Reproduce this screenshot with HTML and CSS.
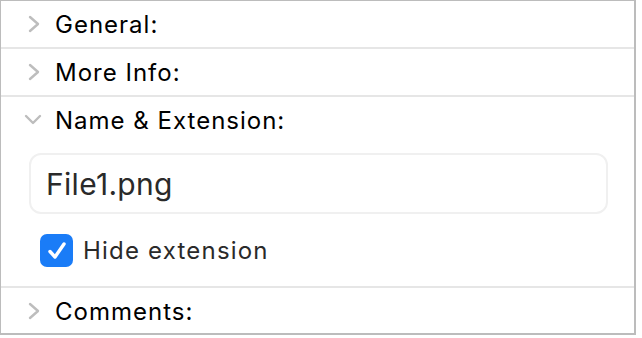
FILE: index.html
```html
<!DOCTYPE html>
<html lang="en">

<head>
    <meta charset="UTF-8">
    <meta name="viewport" content="width=device-width, initial-scale=1.0">
    <title>Info</title>
    <link rel="stylesheet" href="styles.css">
</head>

<body>
    <div class="panel">
        <div class="section">
            <div class="section-head">
                <svg class="chevron" width="14" height="18" viewBox="0 0 14 18"><path d="M3 2 L11 9 L3 16" /></svg>
                <span class="title">General:</span>
            </div>
        </div>

        <div class="section">
            <div class="section-head">
                <svg class="chevron" width="14" height="18" viewBox="0 0 14 18"><path d="M3 2 L11 9 L3 16" /></svg>
                <span class="title">More Info:</span>
            </div>
        </div>

        <div class="section open">
            <div class="section-head">
                <svg class="chevron" width="18" height="18" viewBox="0 0 18 18"><path d="M2 5 L9 12 L16 5" /></svg>
                <span class="title">Name &amp; Extension:</span>
            </div>
            <div class="section-body">
                <div class="field">File1.png</div>
                <label class="check">
                    <span class="box">
                        <svg width="24" height="24" viewBox="0 0 24 24"><path d="M5 12.5 L10 18 L19 5" /></svg>
                    </span>
                    Hide extension
                </label>
            </div>
        </div>

        <div class="section">
            <div class="section-head">
                <svg class="chevron" width="14" height="18" viewBox="0 0 14 18"><path d="M3 2 L11 9 L3 16" /></svg>
                <span class="title">Comments:</span>
            </div>
        </div>
    </div>
</body>

</html>
```

FILE: styles.css
```css
body {
    margin: 0;
    background: #fff;
    font-family: Inter, "Liberation Sans", Arial, sans-serif;
}

.panel {
    width: 636px;
    height: 335px;
    box-sizing: border-box;
    border: 2px solid #bcbcbc;
    border-top-width: 1px;
    border-left-width: 1px;
    background: #fff;
}

.section + .section {
    border-top: 2px solid #e6e6e6;
}

.section-head {
    display: flex;
    align-items: center;
    height: 46px;
    padding-left: 26px;
}

.chevron {
    width: 14px;
    margin-right: 14px;
    fill: none;
    stroke: #bdbdbd;
    stroke-width: 2.4;
    stroke-linecap: round;
    stroke-linejoin: round;
}

.open .chevron {
    width: 18px;
    margin-left: -3px;
    margin-right: 13px;
}

.title {
    font-size: 24px;
    letter-spacing: 1px;
    color: #000;
}

.section-body {
    padding: 10px 26px 19px 28px;
}

.field {
    height: 61px;
    box-sizing: border-box;
    border: 2px solid #f0f0f0;
    border-radius: 12px;
    padding-left: 15px;
    display: flex;
    align-items: center;
    font-size: 30px;
    letter-spacing: 0.3px;
    color: #2a2a2a;
}

.check {
    display: flex;
    align-items: center;
    margin-top: 20px;
    margin-left: 11px;
    font-size: 24px;
    letter-spacing: 1.2px;
    color: #2a2a2a;
}

.box {
    width: 33px;
    height: 33px;
    border-radius: 7px;
    background: #1a7cf7;
    display: flex;
    align-items: center;
    justify-content: center;
    margin-right: 10px;
}

.box svg {
    fill: none;
    stroke: #fff;
    stroke-width: 3.4;
    stroke-linecap: round;
    stroke-linejoin: round;
}
```
